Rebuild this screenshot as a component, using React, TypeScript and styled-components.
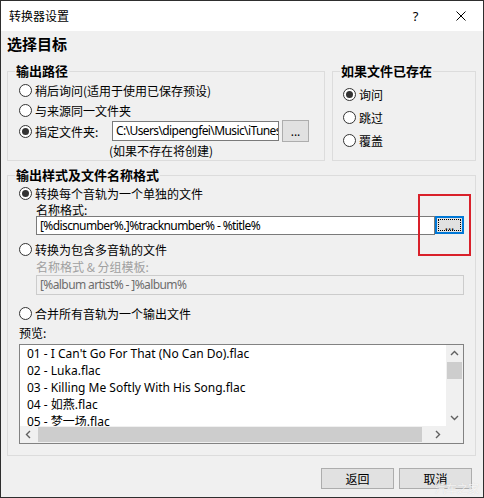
import React from 'react';
import styled, { createGlobalStyle } from 'styled-components';

const Global = createGlobalStyle`
  html, body { margin: 0; padding: 0; background: #fff; }
  body {
    font-family: "Noto Sans", "Noto Sans CJK SC", sans-serif;
    font-size: 12px;
    color: #000;
  }
  * { box-sizing: border-box; }
`;

const Window = styled.div`
  position: relative;
  width: 484px;
  height: 498px;
  border: 1px solid #2e2e2e;
  background: #f0f0f0;
  display: flex;
  flex-direction: column;
`;

const TitleBar = styled.div`
  height: 30px;
  background: #fff;
  display: flex;
  align-items: center;
  padding-left: 8px;
  flex: none;
`;

const TitleText = styled.div`
  flex: 1;
  font-size: 12px;
  line-height: 16px;
  font-family: "Noto Sans CJK SC", sans-serif;
`;

const TitleButton = styled.div`
  width: 45px;
  height: 30px;
  display: flex;
  align-items: center;
  justify-content: center;
  font-size: 13px;
  font-family: "Noto Sans", sans-serif;
`;

const Body = styled.div`
  flex: 1;
  padding: 3px 7px 0 6px;
  display: flex;
  flex-direction: column;
`;

const Heading = styled.div`
  height: 20px;
  line-height: 20px;
  font-size: 15px;
  font-weight: bold;
  font-family: "Noto Sans CJK SC", sans-serif;
`;

const TopRow = styled.div`
  margin-top: 9px;
  display: flex;
  gap: 7px;
  align-items: stretch;
`;

const Group = styled.fieldset<{ $width?: number; $mt?: number }>`
  margin: ${(p) => p.$mt ?? 0}px 0 0 0;
  padding: 0;
  min-width: 0;
  border: 1px solid #dcdcdc;
  ${(p) => (p.$width ? `width: ${p.$width}px; flex: none;` : 'flex: 1;')}
`;

const WideGroup = styled(Group)`
  flex: none;
`;

const Legend = styled.legend`
  margin-left: 7px;
  padding: 0 1px;
  font-size: 13px;
  line-height: 16px;
  font-weight: bold;
  font-family: "Noto Sans CJK SC", sans-serif;
`;

const GroupBody = styled.div<{ $pt?: number; $pl?: number; $pr?: number; $pb?: number }>`
  padding: ${(p) => p.$pt ?? 0}px ${(p) => p.$pr ?? 0}px ${(p) => p.$pb ?? 0}px ${(p) => p.$pl ?? 11}px;
  display: flex;
  flex-direction: column;
`;

const RadioRow = styled.div<{ $h?: number; $mt?: number }>`
  height: ${(p) => p.$h ?? 20}px;
  margin-top: ${(p) => p.$mt ?? 0}px;
  display: flex;
  align-items: center;
  gap: 3px;
  font-family: "Noto Sans CJK SC", sans-serif;
  white-space: nowrap;
`;

const Radio = styled.span<{ $checked?: boolean }>`
  width: 13px;
  height: 13px;
  border-radius: 50%;
  border: 1px solid #333;
  background: #fff;
  flex: none;
  display: flex;
  align-items: center;
  justify-content: center;
  &::after {
    content: '';
    width: 7px;
    height: 7px;
    border-radius: 50%;
    background: #333;
    display: ${(p) => (p.$checked ? 'block' : 'none')};
  }
`;

const PathRow = styled.div`
  height: 22px;
  display: grid;
  grid-template-columns: 90px 167px 27px;
  column-gap: 3px;
  align-items: center;
`;

const RadioLabel = styled.div`
  display: flex;
  align-items: center;
  gap: 3px;
  font-family: "Noto Sans CJK SC", sans-serif;
  white-space: nowrap;
`;

const Field = styled.div<{ $disabled?: boolean; $h?: number }>`
  height: ${(p) => p.$h ?? 20}px;
  border: 1px solid ${(p) => (p.$disabled ? '#cccccc' : '#7a7a7a')};
  background: ${(p) => (p.$disabled ? '#f0f0f0' : '#fff')};
  color: ${(p) => (p.$disabled ? '#6d6d6d' : '#000')};
  padding: 0 3px;
  line-height: ${(p) => (p.$h ?? 20) - 2}px;
  white-space: nowrap;
  overflow: hidden;
  font-family: "Noto Sans", "Noto Sans CJK SC", sans-serif;
  font-size: 12px;
  letter-spacing: -0.6px;
  flex: 1;
  min-width: 0;
`;

const SmallButton = styled.div<{ $focused?: boolean; $w?: number; $h?: number }>`
  width: ${(p) => p.$w ?? 27}px;
  height: ${(p) => p.$h ?? 22}px;
  flex: none;
  background: #e1e1e1;
  border: ${(p) => (p.$focused ? '2px solid #0078d7' : '1px solid #adadad')};
  display: flex;
  align-items: center;
  justify-content: center;
  font-size: 12px;
  line-height: 12px;
  padding-top: 2px;
  font-family: "Noto Sans", sans-serif;
  ${(p) => (p.$focused ? 'outline: 1px dotted #000; outline-offset: -4px;' : '')}
`;

const Note = styled.div`
  height: 18px;
  line-height: 18px;
  padding-left: 90px;
  font-family: "Noto Sans CJK SC", sans-serif;
`;

const SubLabel = styled.div<{ $disabled?: boolean; $h?: number }>`
  height: ${(p) => p.$h ?? 14}px;
  line-height: ${(p) => p.$h ?? 14}px;
  padding-left: 17px;
  color: ${(p) => (p.$disabled ? '#a0a0a0' : '#000')};
  font-family: "Noto Sans CJK SC", sans-serif;
`;

const FieldRow = styled.div<{ $h?: number; $mt?: number }>`
  height: ${(p) => p.$h ?? 20}px;
  margin-top: ${(p) => p.$mt ?? 0}px;
  padding-left: 17px;
  display: flex;
  align-items: flex-start;
`;

const PreviewLabel = styled.div`
  height: 20px;
  line-height: 20px;
  font-family: "Noto Sans CJK SC", sans-serif;
`;

const ListBox = styled.div`
  margin-top: 1px;
  height: 100px;
  border: 1px solid #828282;
  background: #fff;
  display: grid;
  grid-template-columns: 1fr 17px;
  grid-template-rows: 1fr 17px;
  overflow: hidden;
`;

const Items = styled.div`
  overflow: hidden;
  padding-left: 7px;
`;

const Item = styled.div`
  height: 17px;
  line-height: 17px;
  white-space: nowrap;
  font-family: "Noto Sans", "Noto Sans CJK SC", sans-serif;
`;

const VScroll = styled.div`
  background: #f0f0f0;
  display: flex;
  flex-direction: column;
`;

const HScroll = styled.div`
  background: #f0f0f0;
  display: flex;
  align-items: center;
`;

const Corner = styled.div`
  background: #f0f0f0;
`;

const ArrowBox = styled.div`
  width: 17px;
  height: 17px;
  flex: none;
  display: flex;
  align-items: center;
  justify-content: center;
`;

const VThumb = styled.div`
  margin: 0 1px;
  height: 17px;
  background: #cdcdcd;
`;

const HThumb = styled.div`
  margin-left: 1px;
  width: 384px;
  height: 15px;
  background: #cdcdcd;
`;

const Spacer = styled.div`
  flex: 1;
`;

const Footer = styled.div`
  margin-top: 12px;
  margin-right: 4px;
  display: flex;
  justify-content: flex-end;
  gap: 5px;
`;

const DialogButton = styled.div`
  width: 73px;
  height: 21px;
  background: #e1e1e1;
  border: 1px solid #adadad;
  display: flex;
  align-items: center;
  justify-content: center;
  font-size: 12px;
  font-family: "Noto Sans CJK SC", sans-serif;
`;

const Annotation = styled.div`
  position: absolute;
  left: 417px;
  top: 193px;
  width: 53px;
  height: 62px;
  border: 2px solid #d9202a;
  pointer-events: none;
`;

const Watermark = styled.div`
  position: absolute;
  left: 434px;
  top: 479px;
  font-size: 11px;
  font-family: "Noto Sans CJK SC", sans-serif;
  color: rgba(255, 255, 255, 0.8);
  text-shadow: 0 0 1px rgba(140, 140, 140, 0.35);
  pointer-events: none;
`;

const Chevron = ({ dir }: { dir: 'up' | 'down' | 'left' | 'right' }) => {
  const pts: Record<string, string> = {
    up: '1,5 4.5,1.5 8,5',
    down: '1,2 4.5,5.5 8,2',
    left: '5,1 1.5,4.5 5,8',
    right: '2,1 5.5,4.5 2,8',
  };
  const vertical = dir === 'up' || dir === 'down';
  return (
    <svg width={vertical ? 9 : 7} height={vertical ? 7 : 9} viewBox={vertical ? '0 0 9 7' : '0 0 7 9'}>
      <polyline points={pts[dir]} fill="none" stroke="#606060" strokeWidth="1.4" />
    </svg>
  );
};

const files = [
  "01 - I Can't Go For That (No Can Do).flac",
  '02 - Luka.flac',
  '03 - Killing Me Softly With His Song.flac',
  '04 - 如燕.flac',
  '05 - 梦一场.flac',
];

export default function App() {
  return (
    <>
      <Global />
      <Window>
        <TitleBar>
          <TitleText>转换器设置</TitleText>
          <TitleButton>?</TitleButton>
          <TitleButton>
            <svg width="10" height="10" viewBox="0 0 10 10">
              <path d="M0.5 0.5 L9.5 9.5 M9.5 0.5 L0.5 9.5" stroke="#000" strokeWidth="1" />
            </svg>
          </TitleButton>
        </TitleBar>
        <Body>
          <Heading>选择目标</Heading>
          <TopRow>
            <Group $width={318}>
              <Legend>输出路径</Legend>
              <GroupBody $pt={1}>
                <RadioRow>
                  <Radio />
                  稍后询问(适用于使用已保存预设)
                </RadioRow>
                <RadioRow>
                  <Radio />
                  与来源同一文件夹
                </RadioRow>
                <PathRow>
                  <RadioLabel>
                    <Radio $checked />
                    指定文件夹:
                  </RadioLabel>
                  <Field>C:\Users\dipengfei\Music\iTunes\iTunes Media</Field>
                  <SmallButton>...</SmallButton>
                </PathRow>
                <Note>(如果不存在将创建)</Note>
              </GroupBody>
            </Group>
            <Group>
              <Legend>如果文件已存在</Legend>
              <GroupBody $pt={4} $pl={10}>
                <RadioRow $h={23}>
                  <Radio $checked />
                  询问
                </RadioRow>
                <RadioRow $h={23}>
                  <Radio />
                  跳过
                </RadioRow>
                <RadioRow $h={23}>
                  <Radio />
                  覆盖
                </RadioRow>
              </GroupBody>
            </Group>
          </TopRow>
          <WideGroup $mt={6}>
            <Legend>输出样式及文件名称格式</Legend>
            <GroupBody $pr={11} $pb={11}>
              <RadioRow>
                <Radio $checked />
                转换每个音轨为一个单独的文件
              </RadioRow>
              <SubLabel $h={13}>名称格式:</SubLabel>
              <FieldRow $h={19}>
                <Field $h={19}>[%discnumber%.]%tracknumber% - %title%</Field>
                <SmallButton $focused $w={29} $h={18}>...</SmallButton>
              </FieldRow>
              <RadioRow $mt={4}>
                <Radio />
                转换为包含多音轨的文件
              </RadioRow>
              <SubLabel $disabled $h={16}>名称格式 &amp; 分组模板:</SubLabel>
              <FieldRow>
                <Field $disabled>[%album artist% - ]%album%</Field>
              </FieldRow>
              <RadioRow $mt={8}>
                <Radio />
                合并所有音轨为一个输出文件
              </RadioRow>
              <PreviewLabel>预览:</PreviewLabel>
              <ListBox>
                <Items>
                  {files.map((f) => (
                    <Item key={f}>{f}</Item>
                  ))}
                </Items>
                <VScroll>
                  <ArrowBox>
                    <Chevron dir="up" />
                  </ArrowBox>
                  <VThumb />
                  <Spacer />
                  <ArrowBox>
                    <Chevron dir="down" />
                  </ArrowBox>
                </VScroll>
                <HScroll>
                  <ArrowBox>
                    <Chevron dir="left" />
                  </ArrowBox>
                  <HThumb />
                  <Spacer />
                  <ArrowBox>
                    <Chevron dir="right" />
                  </ArrowBox>
                </HScroll>
                <Corner />
              </ListBox>
            </GroupBody>
          </WideGroup>
          <Footer>
            <DialogButton>返回</DialogButton>
            <DialogButton>取消</DialogButton>
          </Footer>
        </Body>
        <Annotation />
        <Watermark>汽车之家</Watermark>
      </Window>
    </>
  );
}
